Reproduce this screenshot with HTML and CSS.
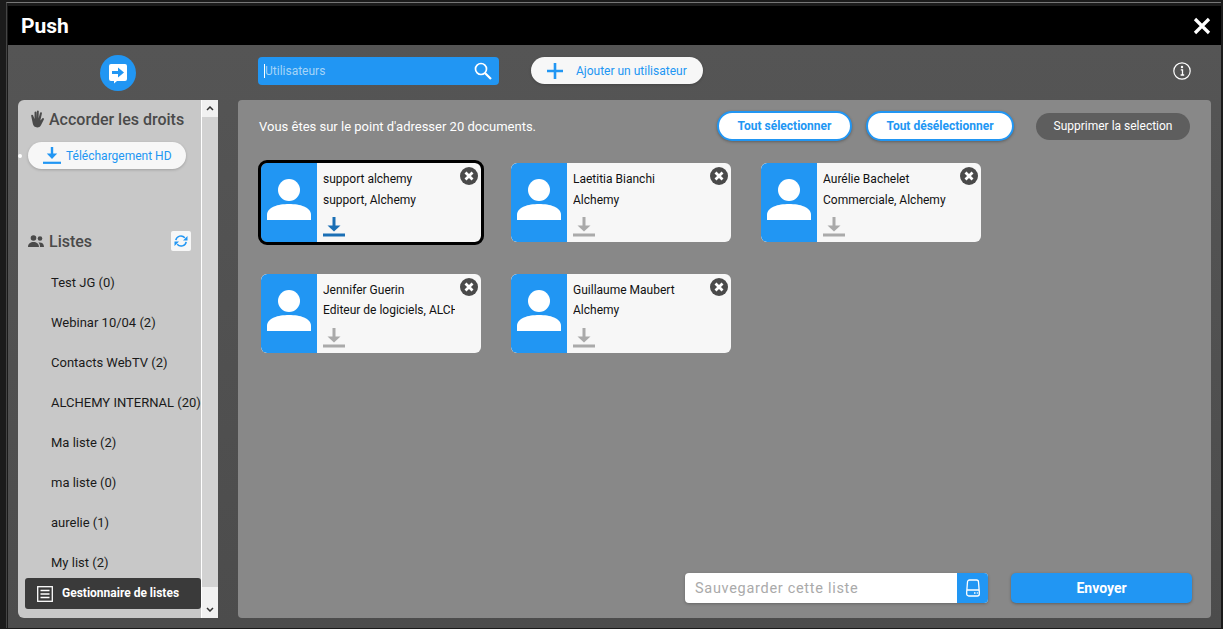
FILE: index.html
```html
<!DOCTYPE html>
<html lang="fr">
<head>
    <meta charset="UTF-8">
    <title>Push</title>
    <link rel="stylesheet" href="styles.css">
</head>
<body>
    <div class="backdrop">
    <div class="modal">
        <header class="modal-head">
            <h1>Push</h1>
            <svg class="close" viewBox="0 0 18 18" width="18" height="18"><path d="M2 2l14 14M16 2L2 16" stroke="#fff" stroke-width="3.2" fill="none"/></svg>
        </header>
        <div class="modal-body">
            <div class="left-col">
                <div class="push-logo">
                    <svg viewBox="0 0 36 36" width="36" height="36">
                        <circle cx="18" cy="18" r="18" fill="#2196f3"/>
                        <path d="M11 9h14a2 2 0 0 1 2 2v13a2 2 0 0 1-2 2H17l-3 2.500V26h-3a2 2 0 0 1-2-2V11a2 2 0 0 1 2-2z" fill="#fff"/>
                        <path d="M12 16h6v-3.500l6 5-6 5V19h-6z" fill="#2196f3"/>
                    </svg>
                </div>
                <aside class="sidebar">
                    <div class="side-scroll">
                        <div class="side-title side-title-rights">
                            <svg viewBox="0 0 16 16" width="18" height="18"><path d="M2.800 5a.9.900 0 0 1 1.700-.3L5.800 8V2a.9.900 0 0 1 1.700 0v5.500L7.900 1a.9.900 0 0 1 1.700.1L9.400 7.500l1.300-5a.9.900 0 0 1 1.700.4L11 9.300l1.800-2c.8-.7 1.800.2 1.300 1.100L11.500 13.500c-.7 1.200-1.800 2-3.200 2C6 15.500 4.800 14.300 4.300 12.300z" fill="#4a4a4a"/></svg>
                            <span>Accorder les droits</span>
                        </div>
                        <div class="hd-row">
                            <button class="pill hd-pill">
                                <svg viewBox="0 0 18 18" width="18" height="18"><path d="M9 0v10" stroke="#2196f3" stroke-width="2.400"/><path d="M3.800 6.500h10.400L9 12z" fill="#2196f3"/><path d="M0 15.800h18" stroke="#2196f3" stroke-width="2.200"/></svg>
                                <span>Téléchargement HD</span>
                            </button>
                        </div>
                        <div class="side-title side-title-lists">
                            <svg viewBox="0 0 16 12" width="16" height="12"><circle cx="5.500" cy="3" r="2.800" fill="#4a4a4a"/><circle cx="12" cy="3.500" r="2.300" fill="#4a4a4a"/><path d="M0 12c0-3.500 2.500-5 5.500-5s5.500 1.500 5.500 5zM12 12c0-2-.6-3.400-1.600-4.400 3-.6 5.600.8 5.600 4.400z" fill="#4a4a4a"/></svg>
                            <span>Listes</span>
                            <button class="refresh">
                                <svg viewBox="0 0 14 14" width="14" height="14"><path d="M1.800 6.200a5.200 5.200 0 0 1 9-2.500M12.200 7.800a5.200 5.200 0 0 1-9 2.500" stroke="#2196f3" stroke-width="1.500" fill="none"/><path d="M13.500 2v4.500H9zM.5 12V7.500H5z" fill="#2196f3"/></svg>
                            </button>
                        </div>
                        <ul class="lists">
                            <li>Test JG (0)</li>
                            <li>Webinar 10/04 (2)</li>
                            <li>Contacts WebTV (2)</li>
                            <li>ALCHEMY INTERNAL (20)</li>
                            <li>Ma liste (2)</li>
                            <li>ma liste (0)</li>
                            <li>aurelie (1)</li>
                            <li>My list (2)</li>
                        </ul>
                    </div>
                    <div class="scrollbar">
                        <span class="scroll-btn"><svg viewBox="0 0 8 5" width="8" height="5"><path d="M1 4l3-3 3 3" stroke="#333" stroke-width="1.500" fill="none"/></svg></span>
                        <span class="scroll-track"></span>
                        <span class="scroll-btn scroll-btn-low"><svg viewBox="0 0 8 5" width="8" height="5"><path d="M1 1l3 3 3-3" stroke="#333" stroke-width="1.500" fill="none"/></svg></span>
                    </div>
                    <button class="list-manager">
                        <svg viewBox="0 0 16 16" width="16" height="16"><rect x=".7" y=".7" width="14.600" height="14.600" fill="none" stroke="#fff" stroke-width="1.300"/><path d="M3.500 4.500h9M3.500 8h9M3.500 11.500h9" stroke="#fff" stroke-width="1.400"/></svg>
                        <span>Gestionnaire de listes</span>
                    </button>
                </aside>
            </div>
            <div class="right-col">
                <div class="toolbar">
                    <div class="search">
                        <span class="search-text">Utilisateurs</span>
                        <svg viewBox="0 0 18 18" width="18" height="18"><circle cx="7" cy="7" r="5.500" stroke="#fff" stroke-width="1.700" fill="none"/><path d="M11 11l6 6" stroke="#fff" stroke-width="2.200"/></svg>
                    </div>
                    <button class="pill add-user">
                        <svg viewBox="0 0 16 16" width="16" height="16"><path d="M8 0v16M0 8h16" stroke="#2196f3" stroke-width="2.600"/></svg>
                        <span>Ajouter un utilisateur</span>
                    </button>
                    <svg class="info" viewBox="0 0 18 18" width="18" height="18"><circle cx="9" cy="9" r="8.200" stroke="#fff" stroke-width="1.200" fill="none"/><circle cx="9" cy="5" r="1.200" fill="#fff"/><path d="M7.800 7.800H9.500v5M7.600 13h3.600" stroke="#fff" stroke-width="1.300" fill="none"/></svg>
                </div>
                <main class="panel">
                    <div class="panel-top">
                        <p class="doc-count">Vous êtes sur le point d'adresser 20 documents.</p>
                        <button class="outline-btn select-all">Tout sélectionner</button>
                        <button class="outline-btn unselect-all">Tout désélectionner</button>
                        <button class="remove-btn">Supprimer la selection</button>
                    </div>
                    <div class="cards">
                        <div class="card selected">
                            <div class="avatar"><svg viewBox="0 0 44 44" width="44" height="44"><circle cx="22" cy="13" r="11" fill="#fff"/><path d="M0 43v-5c0-8 11-11 22-11s22 3 22 11v5z" fill="#fff"/></svg></div>
                            <div class="card-info">
                                <div class="card-name">support alchemy</div>
                                <div class="card-org">support, Alchemy</div>
                                <svg class="card-dl" viewBox="0 0 22 20" width="22" height="20"><path d="M11 0v11" stroke="currentColor" stroke-width="3"/><path d="M4.500 8.500h13L11 14.500z" fill="currentColor"/><path d="M0 18h22" stroke="currentColor" stroke-width="3"/></svg>
                            </div>
                            <span class="remove"><svg viewBox="0 0 18 18" width="18" height="18"><circle cx="9" cy="9" r="9" fill="#4a4a4a"/><path d="M5.500 5.500l7 7M12.500 5.500l-7 7" stroke="#fff" stroke-width="2.800"/></svg></span>
                        </div>
                        <div class="card">
                            <div class="avatar"><svg viewBox="0 0 44 44" width="44" height="44"><circle cx="22" cy="13" r="11" fill="#fff"/><path d="M0 43v-5c0-8 11-11 22-11s22 3 22 11v5z" fill="#fff"/></svg></div>
                            <div class="card-info">
                                <div class="card-name">Laetitia Bianchi</div>
                                <div class="card-org">Alchemy</div>
                                <svg class="card-dl" viewBox="0 0 22 20" width="22" height="20"><path d="M11 0v11" stroke="currentColor" stroke-width="3"/><path d="M4.500 8.500h13L11 14.500z" fill="currentColor"/><path d="M0 18h22" stroke="currentColor" stroke-width="3"/></svg>
                            </div>
                            <span class="remove"><svg viewBox="0 0 18 18" width="18" height="18"><circle cx="9" cy="9" r="9" fill="#4a4a4a"/><path d="M5.500 5.500l7 7M12.500 5.500l-7 7" stroke="#fff" stroke-width="2.800"/></svg></span>
                        </div>
                        <div class="card">
                            <div class="avatar"><svg viewBox="0 0 44 44" width="44" height="44"><circle cx="22" cy="13" r="11" fill="#fff"/><path d="M0 43v-5c0-8 11-11 22-11s22 3 22 11v5z" fill="#fff"/></svg></div>
                            <div class="card-info">
                                <div class="card-name">Aurélie Bachelet</div>
                                <div class="card-org">Commerciale, Alchemy</div>
                                <svg class="card-dl" viewBox="0 0 22 20" width="22" height="20"><path d="M11 0v11" stroke="currentColor" stroke-width="3"/><path d="M4.500 8.500h13L11 14.500z" fill="currentColor"/><path d="M0 18h22" stroke="currentColor" stroke-width="3"/></svg>
                            </div>
                            <span class="remove"><svg viewBox="0 0 18 18" width="18" height="18"><circle cx="9" cy="9" r="9" fill="#4a4a4a"/><path d="M5.500 5.500l7 7M12.500 5.500l-7 7" stroke="#fff" stroke-width="2.800"/></svg></span>
                        </div>
                        <div class="card">
                            <div class="avatar"><svg viewBox="0 0 44 44" width="44" height="44"><circle cx="22" cy="13" r="11" fill="#fff"/><path d="M0 43v-5c0-8 11-11 22-11s22 3 22 11v5z" fill="#fff"/></svg></div>
                            <div class="card-info">
                                <div class="card-name">Jennifer Guerin</div>
                                <div class="card-org">Editeur de logiciels, ALCHEMY</div>
                                <svg class="card-dl" viewBox="0 0 22 20" width="22" height="20"><path d="M11 0v11" stroke="currentColor" stroke-width="3"/><path d="M4.500 8.500h13L11 14.500z" fill="currentColor"/><path d="M0 18h22" stroke="currentColor" stroke-width="3"/></svg>
                            </div>
                            <span class="remove"><svg viewBox="0 0 18 18" width="18" height="18"><circle cx="9" cy="9" r="9" fill="#4a4a4a"/><path d="M5.500 5.500l7 7M12.500 5.500l-7 7" stroke="#fff" stroke-width="2.800"/></svg></span>
                        </div>
                        <div class="card">
                            <div class="avatar"><svg viewBox="0 0 44 44" width="44" height="44"><circle cx="22" cy="13" r="11" fill="#fff"/><path d="M0 43v-5c0-8 11-11 22-11s22 3 22 11v5z" fill="#fff"/></svg></div>
                            <div class="card-info">
                                <div class="card-name">Guillaume Maubert</div>
                                <div class="card-org">Alchemy</div>
                                <svg class="card-dl" viewBox="0 0 22 20" width="22" height="20"><path d="M11 0v11" stroke="currentColor" stroke-width="3"/><path d="M4.500 8.500h13L11 14.500z" fill="currentColor"/><path d="M0 18h22" stroke="currentColor" stroke-width="3"/></svg>
                            </div>
                            <span class="remove"><svg viewBox="0 0 18 18" width="18" height="18"><circle cx="9" cy="9" r="9" fill="#4a4a4a"/><path d="M5.500 5.500l7 7M12.500 5.500l-7 7" stroke="#fff" stroke-width="2.800"/></svg></span>
                        </div>
                    </div>
                    <div class="panel-bottom">
                        <div class="save-list">
                            <span class="save-text">Sauvegarder cette liste</span>
                            <span class="save-btn"><svg viewBox="0 0 14 18" width="14" height="18"><path d="M3.500 1h7a2 2 0 0 1 2 2l.8 10v2a2 2 0 0 1-2 2H2.700a2 2 0 0 1-2-2v-2l.8-10a2 2 0 0 1 2-2zM.8 11h12.400" stroke="#fff" stroke-width="1.300" fill="none"/><path d="M8 14h1.500M10.800 14h1" stroke="#fff" stroke-width="1.500"/></svg></span>
                        </div>
                        <button class="send-btn">Envoyer</button>
                    </div>
                </main>
            </div>
        </div>
    </div>
    </div>
</body>
</html>
```

FILE: styles.css
```css
* {
    box-sizing: border-box;
}

html,
body {
    height: 100%;
}

body {
    margin: 0;
    overflow: hidden;
    background-color: #1b1b1b;
    font-family: 'Roboto', 'Liberation Sans', sans-serif;
    color: #111;
    padding: 2px 2px 1px 6px;
}

button {
    font-family: inherit;
    border: none;
    padding: 0;
}

.backdrop {
    border-top: 1px solid #777;
    border-left: 1px solid #444;
    padding: 3px 0 0 1px;
}

.modal {
    height: 622px;
    display: flex;
    flex-direction: column;
    background: #505050;
}

.modal-head {
    height: 39px;
    flex: none;
    background: #000;
    color: #fff;
    display: flex;
    align-items: center;
    justify-content: space-between;
    padding: 0 10px 0 13px;
}

.modal-head h1 {
    margin: 0;
    font-size: 21px;
    font-weight: 700;
}

.modal-body {
    flex: 1;
    display: flex;
    padding: 0 10px 10px 10px;
    background: linear-gradient(#555, #4c4c4c);
    min-height: 0;
}

.left-col {
    width: 200px;
    flex: none;
    margin-right: 20px;
    display: flex;
    flex-direction: column;
}

.push-logo {
    height: 55px;
    flex: none;
    display: flex;
    align-items: flex-start;
    justify-content: center;
    padding: 10px 0 0 0;
}

.sidebar {
    flex: 1;
    position: relative;
    display: flex;
    background: #c8c8c8;
    border-radius: 6px 0 0 6px;
    min-height: 0;
}

.side-scroll {
    flex: 1;
    overflow: hidden;
    min-width: 0;
}

.side-title {
    display: flex;
    align-items: center;
    color: #4a4a4a;
    font-size: 16px;
    font-weight: 500;
    padding-left: 10px;
}

.side-title-rights {
    height: 38px;
}

.side-title-rights svg {
    margin-right: 3px;
}

.side-title-lists {
    height: 40px;
    margin-top: 52px;
}

.side-title-lists svg {
    margin-right: 5px;
}

.hd-row {
    padding: 4px 0 0 10px;
    position: relative;
}

.hd-row::before {
    content: "";
    position: absolute;
    left: 0;
    top: 16px;
    width: 4px;
    height: 4px;
    border-radius: 50%;
    background: #fff;
}

.pill {
    display: flex;
    align-items: center;
    background: #f7f7f7;
    border-radius: 14px;
    color: #2196f3;
    font-size: 12px;
    box-shadow: 0 1px 3px rgba(0, 0, 0, 0.2);
}

.hd-pill {
    width: 158px;
    height: 27px;
    padding-left: 15px;
}

.hd-pill svg {
    margin-right: 5px;
}

.refresh {
    margin-left: auto;
    margin-right: 10px;
    width: 20px;
    height: 20px;
    background: #f7f7f7;
    border-radius: 2px;
    display: flex;
    align-items: center;
    justify-content: center;
}

.refresh svg {
    margin: 0;
}

.lists {
    list-style: none;
    margin: 2px 0 0 0;
    padding: 0 0 0 33px;
    white-space: nowrap;
}

.lists li {
    height: 40px;
    line-height: 40px;
    font-size: 13px;
    color: #1a1a1a;
}

.scrollbar {
    width: 17px;
    flex: none;
    display: flex;
    flex-direction: column;
    border-left: 1px solid #fff;
    background: #d2d2d2;
}

.scroll-btn {
    height: 17px;
    flex: none;
    background: #f1f1f1;
    display: flex;
    align-items: center;
    justify-content: center;
}

.scroll-btn-low {
    height: 31px;
    align-items: flex-end;
    padding-bottom: 6px;
}

.scroll-track {
    flex: 1;
}

.list-manager {
    position: absolute;
    left: 7px;
    bottom: 9px;
    width: 176px;
    height: 31px;
    background: #3a3a3a;
    border-radius: 3px;
    color: #fff;
    font-size: 12px;
    font-weight: 700;
    display: flex;
    align-items: center;
    padding: 0 0 2px 12px;
}

.list-manager svg {
    margin: 2px 9px 0 0;
    flex: none;
}

.right-col {
    flex: 1;
    display: flex;
    flex-direction: column;
    min-width: 0;
}

.toolbar {
    height: 55px;
    flex: none;
    display: flex;
    align-items: flex-start;
    padding: 12px 20px 0 20px;
}

.search {
    width: 241px;
    height: 28px;
    background: #2196f3;
    border-radius: 4px;
    display: flex;
    align-items: center;
    justify-content: space-between;
    padding: 0 7px 0 6px;
}

.search-text {
    font-size: 12px;
    color: #a5d4f7;
    border-left: 1px solid #fff;
    line-height: 14px;
}

.add-user {
    width: 172px;
    height: 27px;
    margin-left: 32px;
    padding-left: 16px;
}

.add-user span {
    margin-left: 13px;
}

.info {
    margin-left: auto;
    margin-top: 5px;
}

.panel {
    flex: 1;
    display: flex;
    flex-direction: column;
    background: #888;
    border-radius: 4px;
    padding: 11px 21px 15px 21px;
    min-height: 0;
}

.panel-top {
    display: flex;
    align-items: center;
    height: 30px;
}

.doc-count {
    margin: 0 auto 0 0;
    font-size: 13px;
    color: #fff;
}

.outline-btn {
    height: 30px;
    background: #fff;
    border: 2px solid #2196f3;
    border-radius: 15px;
    color: #2196f3;
    font-size: 12px;
    font-weight: 700;
    box-shadow: 0 1px 3px rgba(0, 0, 0, 0.3);
}

.select-all {
    width: 135px;
}

.unselect-all {
    width: 148px;
    margin-left: 14px;
}

.remove-btn {
    width: 154px;
    height: 27px;
    margin-left: 22px;
    background: #5e5e5e;
    border-radius: 14px;
    color: #fff;
    font-size: 12px;
}

.cards {
    display: grid;
    grid-template-columns: repeat(3, 220px);
    column-gap: 30px;
    row-gap: 32px;
    padding: 22px 0 0 2px;
}

.card {
    position: relative;
    height: 79px;
    display: flex;
    background: #f7f7f7;
    border-radius: 6px;
    overflow: hidden;
}

.card.selected {
    overflow: visible;
    outline: 3px solid #000;
    outline-offset: 0;
}

.avatar {
    width: 56px;
    flex: none;
    background: #2196f3;
    border-radius: 6px 0 0 6px;
    display: flex;
    align-items: center;
    justify-content: center;
    padding-bottom: 8px;
}

.card-info {
    flex: 1;
    min-width: 0;
    padding: 6px 26px 0 6px;
    font-size: 12px;
    color: #111;
}

.card-name,
.card-org {
    white-space: nowrap;
    overflow: hidden;
    height: 20px;
    line-height: 20px;
}

.card-org {
    margin-top: 1px;
    width: 132px;
}

.card:nth-child(n+4) .card-org {
    margin-top: 0;
}

.card-dl {
    display: block;
    margin-top: 7px;
    color: #aaa;
}

.card:nth-child(n+4) .card-dl {
    margin-top: 8px;
}

.selected .card-dl {
    color: #1a6fb5;
}

.remove {
    position: absolute;
    top: 4px;
    right: 3px;
    height: 18px;
}

.panel-bottom {
    margin-top: auto;
    margin-right: -2px;
    display: flex;
    justify-content: flex-end;
    align-items: center;
}

.save-list {
    width: 303px;
    height: 30px;
    display: flex;
    background: #fff;
    border-radius: 4px;
    box-shadow: 0 1px 3px rgba(0, 0, 0, 0.25);
}

.save-text {
    flex: 1;
    line-height: 32px;
    padding-left: 10px;
    font-size: 14.500px;
    letter-spacing: 0.7px;
    color: #aaa;
}

.save-btn {
    width: 31px;
    background: #2196f3;
    border-radius: 0 4px 4px 0;
    display: flex;
    align-items: center;
    justify-content: center;
}

.send-btn {
    width: 181px;
    height: 30px;
    margin-left: 23px;
    background: #2196f3;
    border-radius: 5px;
    color: #fff;
    font-size: 14px;
    font-weight: 700;
    box-shadow: 0 1px 3px rgba(0, 0, 0, 0.3);
}
```
